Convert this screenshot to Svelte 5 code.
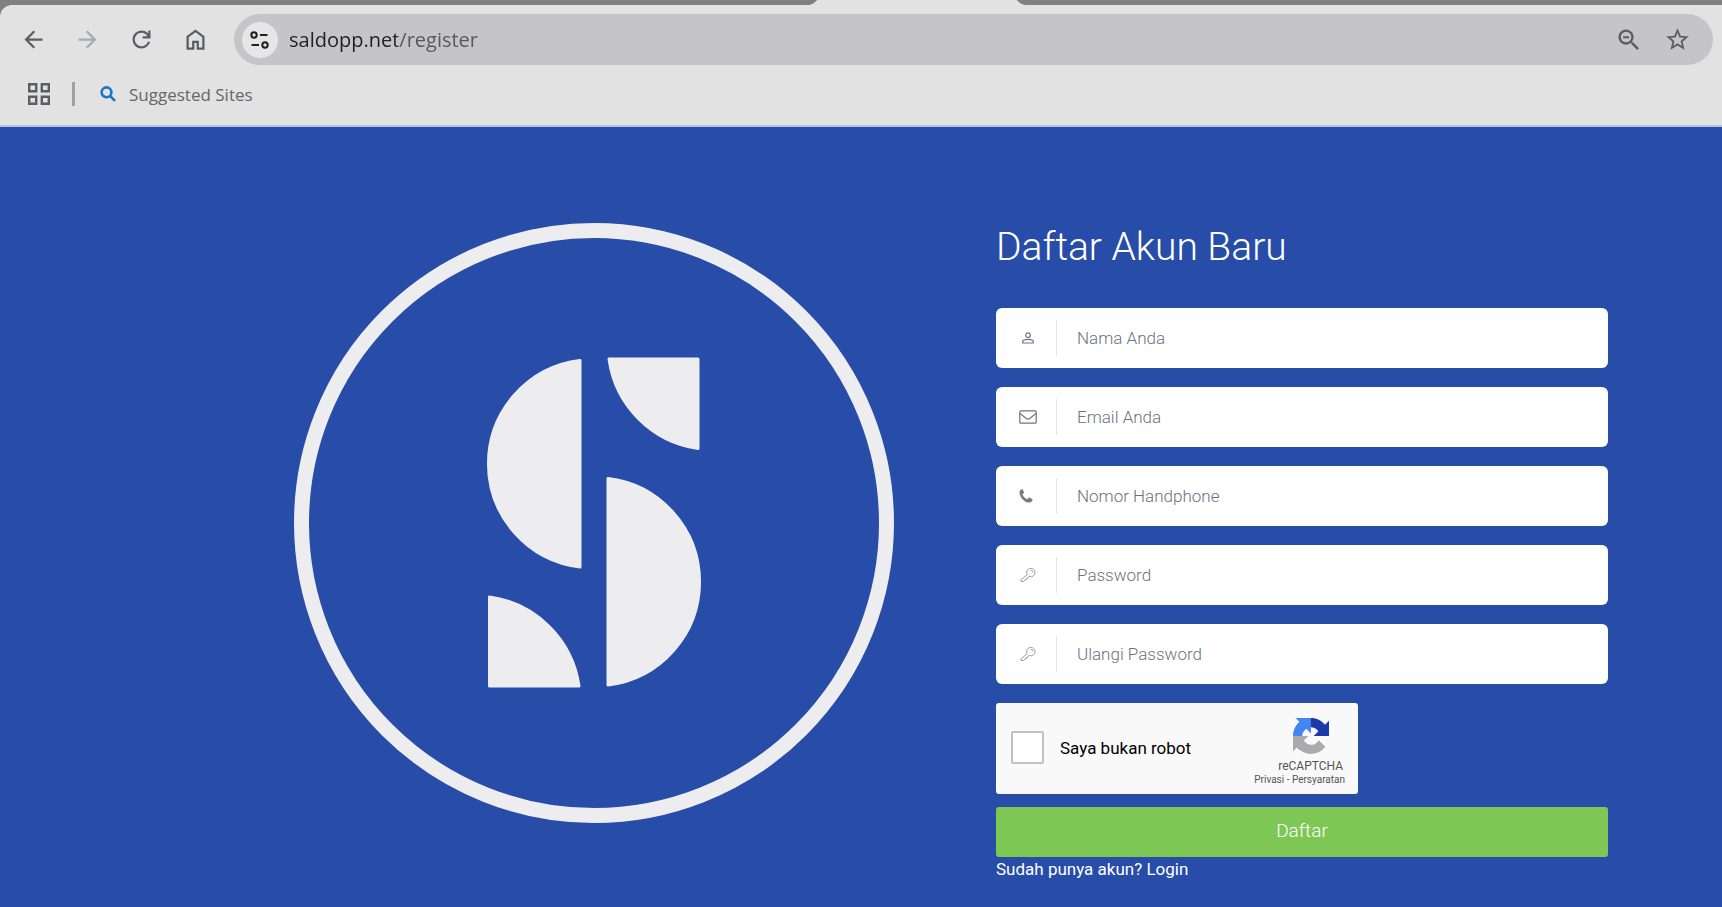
<script lang="ts">
	interface Field {
		id: string;
		type: 'text' | 'email' | 'tel' | 'password';
		label: string;
		icon: 'user' | 'mail' | 'phone' | 'key';
	}

	const fields: Field[] = [
		{ id: 'name', type: 'text', label: 'Nama Anda', icon: 'user' },
		{ id: 'email', type: 'email', label: 'Email Anda', icon: 'mail' },
		{ id: 'phone', type: 'tel', label: 'Nomor Handphone', icon: 'phone' },
		{ id: 'password', type: 'password', label: 'Password', icon: 'key' },
		{ id: 'password-repeat', type: 'password', label: 'Ulangi Password', icon: 'key' }
	];

	let values: Record<string, string> = $state({});
	let address = $state('saldopp.net/register');
	let human = $state(false);
</script>

<div class="window">
	<header class="browser">
		<div class="tabstrip"><div class="tab"></div></div>

		<div class="toolbar">
			<div class="row">
				<nav class="nav" aria-label="Browser">
					<button class="tool" aria-label="Back">
						<svg width="27" height="27" viewBox="0 0 24 24">
							<path d="M20 11H7.8l5.6-5.6L12 4l-8 8 8 8 1.4-1.4L7.8 13H20z" />
						</svg>
					</button>
					<button class="tool" aria-label="Forward" disabled>
						<svg width="27" height="27" viewBox="0 0 24 24">
							<path d="M4 11h12.2l-5.6-5.6L12 4l8 8-8 8-1.4-1.4 5.6-5.6H4z" />
						</svg>
					</button>
					<button class="tool" aria-label="Reload">
						<svg width="27" height="27" viewBox="0 0 24 24">
							<path
								d="M12 20q-3.35 0-5.675-2.325T4 12t2.325-5.675T12 4q1.725 0 3.3.713T18 6.75V4h2v7h-7V9h4.2q-.8-1.4-2.187-2.2T12 6Q9.5 6 7.75 7.75T6 12t1.75 4.25T12 18q1.925 0 3.475-1.1T17.65 14h2.1q-.7 2.65-2.85 4.325T12 20"
							/>
						</svg>
					</button>
					<button class="tool" aria-label="Home">
						<svg width="27" height="27" viewBox="0 0 24 24">
							<path d="M6 19h3v-6h6v6h3v-9l-6-4.5L6 10zm-2 2V9l8-6 8 6v12h-7v-6h-2v6z" />
						</svg>
					</button>
				</nav>

				<div class="omnibox">
					<button class="site" aria-label="Site information">
						<svg width="22" height="22" viewBox="0 0 22 22" fill="none" stroke="#1f1f1f" stroke-width="2">
							<circle cx="5" cy="6" r="2.7" />
							<path d="M11 6h7.5M2.5 16h7.5" />
							<circle cx="16" cy="16" r="2.7" />
						</svg>
					</button>
					<input class="address" aria-label="Address" bind:value={address} />
					<button class="tool" aria-label="Zoom out">
						<svg width="28" height="28" viewBox="0 0 24 24">
							<path
								d="M15.5 14h-.8l-.3-.3A6.5 6.5 0 1 0 13.7 14.4l.3.3v.8l5 5 1.5-1.5zm-6 0a4.5 4.5 0 1 1 0-9 4.5 4.5 0 0 1 0 9M7 8.7h5v1.7H7z"
							/>
						</svg>
					</button>
					<button class="tool" aria-label="Bookmark this page">
						<svg width="27" height="27" viewBox="0 0 24 24">
							<path
								d="M22 9.24l-7.19-.62L12 2 9.19 8.63 2 9.24l5.46 4.73L5.82 21 12 17.27 18.18 21l-1.63-7.03zM12 15.4l-3.76 2.27 1-4.28-3.32-2.88 4.38-.38L12 6.1l1.71 4.04 4.38.38-3.32 2.88 1 4.28z"
							/>
						</svg>
					</button>
				</div>
			</div>

			<div class="bookmarks">
				<button class="apps" aria-label="Apps">
					<svg width="22" height="22" viewBox="0 0 22 22" fill="none" stroke="#5b5d60" stroke-width="2.4">
						<path d="M1.2 1.2h7v7h-7zM13.8 1.2h7v7h-7zM1.2 13.8h7v7h-7zM13.8 13.8h7v7h-7z" />
					</svg>
				</button>
				<span class="rule"></span>
				<a class="bookmark" href="#suggested">
					<svg width="16" height="16" viewBox="0 0 16 16" fill="none" stroke="#1f74c4" stroke-width="2.6">
						<circle cx="6.5" cy="6.3" r="4.9" />
						<path d="M10 9.8l5 5" />
					</svg>
					Suggested Sites
				</a>
			</div>
		</div>
	</header>

	<main class="page">
		<div class="brand">
			<svg class="logo" viewBox="0 0 600 600" role="img" aria-label="Logo">
				<circle cx="300" cy="300" r="292.5" fill="none" stroke="#ededf0" stroke-width="15" />
				<g fill="#ededf0" stroke="#ededf0" stroke-width="3" stroke-linejoin="round">
					<path d="M286 137.5V344A104 104 0 0 1 286 137.5z" />
					<path d="M314 255.5V462A104 104 0 0 0 314 255.5z" />
					<path d="M315 136h89v89.500A105 105 0 0 1 315 136z" />
					<path d="M195.5 463H285A105 105 0 0 0 195.5 374z" />
				</g>
			</svg>
		</div>

		<form class="register" onsubmit={(e) => e.preventDefault()}>
			<h1>Daftar Akun Baru</h1>

			<div class="fields">
				{#each fields as field (field.id)}
					<div class="field">
						<label for={field.id} aria-label={field.label}>
							{#if field.icon === 'user'}
								<svg width="12" height="12" viewBox="0 0 12 12" fill="none" stroke="#6c7686" stroke-width="1.2">
									<circle cx="6" cy="3.2" r="2.3" />
									<path d="M.7 11V9.6C.7 8 3.5 7.3 6 7.3s5.3.7 5.3 2.3V11z" />
								</svg>
							{:else if field.icon === 'mail'}
								<svg width="18" height="14" viewBox="0 0 18 14" fill="none" stroke="#6c7686" stroke-width="1.2">
									<rect x=".8" y=".8" width="16.4" height="12.4" rx="1" />
									<path d="M1 3.5l6.3 5q1.7 1.2 3.4 0L17 3.5" />
								</svg>
							{:else if field.icon === 'phone'}
								<svg class="phone" width="14" height="14" viewBox="0 0 14 14" fill="#757b8c">
									<path
										d="M.5 2.7C.6 1.5 1.5.6 2.9.2c.5-.1.7 0 .9.5l1.1 2.4c.2.5.1.8-.2 1.1l-1 .9c-.3.3-.3.5-.1.9 1 1.7 2.3 3 4 4 .4.2.7.2.9-.1l1-1.2c.3-.3.5-.3.9-.1l2.7 1.4c.4.2.5.4.4.8-.3 1.7-1.4 2.7-3 2.8C5.7 13.7.3 8.3.5 2.7z"
									/>
								</svg>
							{:else}
								<svg width="16" height="16" viewBox="0 0 16 16" fill="none" stroke="#9a9ea6" stroke-width="1">
									<path d="M7.2 7.7A4.2 4.2 0 1 1 9.3 9.5L7.6 10.5v1.2H6.2v1.2H4.9L3.5 14.5H1v-1.7z" />
									<path d="M10.6 3.2q2 .2 2.3 2.2" />
								</svg>
							{/if}
						</label>
						<input
							id={field.id}
							type={field.type}
							placeholder={field.label}
							bind:value={values[field.id]}
						/>
					</div>
				{/each}
			</div>

			<div class="captcha">
				<label class="human">
					<input type="checkbox" bind:checked={human} />
					<span>Saya bukan robot</span>
				</label>
				<div class="badge">
					<div class="badge-brand">
						<svg width="36" height="36" viewBox="0 0 64 64">
							<path
								fill="#1c3aa9"
								d="M64 31.955l-.033-1.37V4.687l-7.16 7.16C50.948 4.674 42.033.093 32.05.093c-10.4 0-19.622 4.96-25.458 12.64l11.736 11.86a15.55 15.55 0 0 1 4.754-5.334c2.05-1.6 4.952-2.906 8.968-2.906.485 0 .86.057 1.135.163 4.976.393 9.288 3.14 11.828 7.124l-8.307 8.307L64 31.953"
							/>
							<path
								fill="#4285f4"
								d="M31.862.094l-1.37.033H4.594l7.16 7.16C4.58 13.147 0 22.06 0 32.046c0 10.4 4.96 19.622 12.64 25.458L24.5 45.768a15.55 15.55 0 0 1-5.334-4.754c-1.6-2.05-2.906-4.952-2.906-8.968 0-.485.057-.86.163-1.135.393-4.976 3.14-9.288 7.124-11.828l8.307 8.307L31.86.095"
							/>
							<path
								fill="#ababab"
								d="M.001 32.045l.033 1.37v25.898l7.16-7.16c5.86 7.173 14.774 11.754 24.76 11.754 10.4 0 19.622-4.96 25.458-12.64l-11.736-11.86a15.55 15.55 0 0 1-4.754 5.334c-2.05 1.6-4.952 2.906-8.968 2.906-.485 0-.86-.057-1.135-.163-4.976-.393-9.288-3.14-11.828-7.124l8.307-8.307c-10.522.04-22.4.066-27.295-.005"
							/>
						</svg>
						<span class="badge-name">reCAPTCHA</span>
					</div>
					<span class="badge-links"><a href="#privacy">Privasi</a> - <a href="#terms">Persyaratan</a></span>
				</div>
			</div>

			<button class="submit" type="submit">Daftar</button>
			<p class="login">Sudah punya akun? <a href="#login">Login</a></p>
		</form>
	</main>
</div>

<style>
	:global(body) {
		background: #274da8;
	}

	.window {
		display: flex;
		flex-direction: column;
		min-height: 100vh;
		font-family: Roboto, 'Liberation Sans', sans-serif;
	}

	button {
		padding: 0;
		border: 0;
		background: none;
		font: inherit;
		cursor: pointer;
	}

	a {
		color: inherit;
		text-decoration: none;
	}

	svg {
		display: block;
	}

	/* --- Browser chrome --- */
	.browser {
		background: #808080;
		font-family: 'Open Sans', 'Noto Sans', sans-serif;
	}

	.tabstrip {
		height: 5px;
	}

	.tab {
		width: 12.5%;
		height: 5px;
		margin-left: 47%;
		background: #e2e2e2;
		clip-path: polygon(0 100%, 4px 70%, 8px 0, calc(100% - 8px) 0, calc(100% - 4px) 70%, 100% 100%);
	}

	.toolbar {
		padding: 9px 9px 0 6px;
		border-bottom: 2px solid #b3c5e0;
		border-top-left-radius: 12px;
		background: #e2e2e2;
	}

	.row {
		display: flex;
		gap: 12px;
	}

	.nav {
		display: flex;
	}

	.tool {
		display: grid;
		place-items: center;
		width: 54px;
	}

	.tool svg {
		fill: #5b5d60;
	}

	.tool:disabled svg {
		fill: #a8a9ab;
	}

	.omnibox {
		display: flex;
		flex: 1;
		align-items: center;
		height: 51px;
		padding: 0 12px 0 8px;
		border-radius: 26px;
		background: #c5c5c7;
	}

	.omnibox .tool {
		width: 48px;
	}

	.site {
		display: grid;
		place-items: center;
		width: 36px;
		height: 36px;
		border-radius: 50%;
		background: #e6e6e7;
	}

	/* host part is darker than the path */
	.address {
		flex: 1;
		min-width: 0;
		margin-left: 11px;
		padding: 0;
		border: 0;
		outline: 0;
		background: linear-gradient(90deg, #1f2023 108px, #55575b 108px);
		background-clip: text;
		color: #1f2023;
		font-family: inherit;
		font-size: 20px;
		line-height: 32px;
		-webkit-text-fill-color: transparent;
	}

	.bookmarks {
		display: flex;
		align-items: center;
		height: 58px;
		padding: 0 0 2px 22px;
	}

	.rule {
		width: 3px;
		height: 24px;
		margin: 0 25px 0 22px;
		background: #a0a0a0;
	}

	.bookmark {
		display: flex;
		align-items: center;
		gap: 13px;
		color: #65676a;
		font-size: 17px;
	}

	/* --- Page --- */
	.page {
		display: grid;
		flex: 1;
		grid-template-columns: 134fr 102fr;
		align-items: start;
		padding: 96px 114px 24px 192px;
		background: #274da8;
	}

	.brand {
		display: flex;
		justify-content: center;
	}

	.logo {
		width: 75%;
		max-width: 600px;
	}

	.register {
		color: #fff;
	}

	h1 {
		margin: 0 0 37px;
		font-size: 39px;
		font-weight: 300;
		line-height: 48px;
	}

	.fields {
		display: flex;
		flex-direction: column;
		gap: 19px;
	}

	.field {
		display: flex;
		align-items: center;
		height: 60px;
		border-radius: 6px;
		background: #fff;
	}

	.field label {
		display: grid;
		place-items: center;
		width: 61px;
		height: 36px;
		padding-left: 4px;
		box-sizing: border-box;
		border-right: 1px solid #e2e4e8;
	}

	.field .phone {
		margin-right: 4px;
	}

	.field input {
		flex: 1;
		min-width: 0;
		height: 100%;
		padding: 0 20px;
		border: 0;
		border-radius: 6px;
		outline: 0;
		background: none;
		color: #444;
		font-family: inherit;
		font-size: 17px;
		font-weight: 300;
	}

	.field input::placeholder {
		color: #6b7280;
		opacity: 1;
	}

	.captcha {
		display: flex;
		align-items: center;
		justify-content: space-between;
		width: 362px;
		max-width: 100%;
		height: 91px;
		margin: 19px 0 13px;
		padding: 0 13px 0 15px;
		box-sizing: border-box;
		border-radius: 3px;
		background: #f9f9f9;
		color: #000;
	}

	.human {
		display: flex;
		align-items: center;
		gap: 16px;
		padding-bottom: 2px;
		font-size: 17px;
	}

	.human input {
		width: 33px;
		height: 33px;
		margin: 0;
		border: 2px solid #c1c1c1;
		border-radius: 2px;
		background: #fff;
		appearance: none;
	}

	.human input:checked {
		background: #7dc855;
	}

	.badge {
		display: flex;
		flex-direction: column;
		align-items: flex-end;
		padding-top: 6px;
		color: #555;
	}

	.badge-brand {
		display: flex;
		flex-direction: column;
		align-items: center;
		gap: 4px;
		margin-right: 2px;
	}

	.badge-name {
		font-size: 12px;
		line-height: 16px;
	}

	.badge-links {
		font-size: 10px;
		line-height: 12px;
	}

	.submit {
		display: block;
		width: 100%;
		height: 50px;
		padding-bottom: 3px;
		border-radius: 3px;
		background: #7dc855;
		color: #fff;
		font-size: 19px;
		font-weight: 300;
	}

	.login {
		margin: 0;
		font-size: 17px;
		line-height: 24px;
	}
</style>
